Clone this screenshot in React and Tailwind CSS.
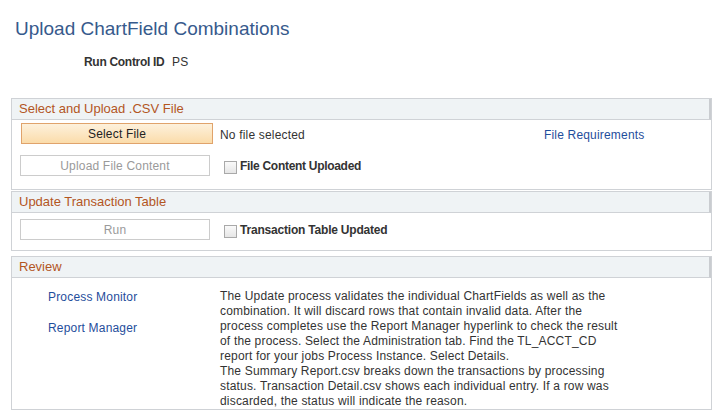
const reviewText = [
  "The Update process validates the individual ChartFields as well as the",
  "combination. It will discard rows that contain invalid data. After the",
  "process completes use the Report Manager hyperlink to check the result",
  "of the process. Select the Administration tab. Find the TL_ACCT_CD",
  "report for your jobs Process Instance. Select Details.",
  "The Summary Report.csv breaks down the transactions by processing",
  "status. Transaction Detail.csv shows each individual entry. If a row was",
  "discarded, the status will indicate the reason.",
];

export default function App() {
  return (
    <div className="w-[725px] h-[418px] bg-white text-[12px] leading-[15px] tracking-[0.18px] text-[#333] font-['Liberation_Sans',Arial,sans-serif]">
      <h1 className="pl-[15px] pt-[17px] text-[19px] leading-[23px] tracking-normal text-[#375a8c]">
        Upload ChartField Combinations
      </h1>
      <div className="mt-[15px] flex pl-[84px]">
        <span className="font-bold w-[88px] tracking-[-0.3px]">Run Control ID</span>
        <span>PS</span>
      </div>

      <div className="ml-[11px] mt-[28px] w-[701px]">
        <section className="border border-[#cfd2d6]">
          <Header>Select and Upload .CSV File</Header>
          <div className="pt-[3px] pb-[13px]">
            <div className="flex items-start h-[21px]">
              <button className="ml-[9px] w-[192px] h-[21px] pt-[1px] border border-[#e0a36b] bg-gradient-to-b from-[#fdf1dc] to-[#fbdcaa] text-[#222]">
                Select File
              </button>
              <span className="ml-[7px] pt-[5px] w-[324px]">No file selected</span>
              <a className="pt-[5px] text-[#1f4e9c]">File Requirements</a>
            </div>
            <div className="flex items-start h-[21px] mt-[11px]">
              <button className="ml-[8px] w-[190px] h-[21px] pt-[1px] border border-[#cccccc] bg-white text-[#9a9a9a]">
                Upload File Content
              </button>
              <Check />
              <span className="ml-[3px] pt-[4px] font-bold tracking-[-0.3px]">File Content Uploaded</span>
            </div>
          </div>
        </section>

        <section className="mt-[1px] border border-[#cfd2d6]">
          <Header>Update Transaction Table</Header>
          <div className="pt-[6px] pb-[10px]">
            <div className="flex items-start h-[21px]">
              <button className="ml-[8px] w-[190px] h-[21px] pt-[1px] border border-[#cccccc] bg-white text-[#9a9a9a]">
                Run
              </button>
              <Check />
              <span className="ml-[3px] pt-[4px] font-bold tracking-[-0.2px]">Transaction Table Updated</span>
            </div>
          </div>
        </section>

        <section className="mt-[5px] border border-[#cfd2d6]">
          <Header>Review</Header>
          <div className="flex pt-[11px] h-[131px]">
            <div className="w-[208px] pl-[36px] pt-[1px] flex flex-col gap-[16px]">
              <a className="text-[#1f4e9c]">Process Monitor</a>
              <a className="text-[#1f4e9c]">Report Manager</a>
            </div>
            <p className="flex flex-col whitespace-nowrap">
              {reviewText.map((line) => (
                <span key={line}>{line}</span>
              ))}
            </p>
          </div>
        </section>
      </div>
    </div>
  );
}

function Header({ children }) {
  return (
    <div className="h-[21px] bg-[#eff3f5] border-b border-[#cfd2d6] border-r-2 border-r-[#c9ccd0] pl-[7px] text-[13px] leading-[20px] tracking-normal text-[#b3561f]">
      {children}
    </div>
  );
}

function Check() {
  return (
    <span className="ml-[14px] mt-[6px] w-[13px] h-[13px] border border-[#a9a9a9] bg-gradient-to-b from-[#fafafa] to-[#e6e6e6]" />
  );
}
